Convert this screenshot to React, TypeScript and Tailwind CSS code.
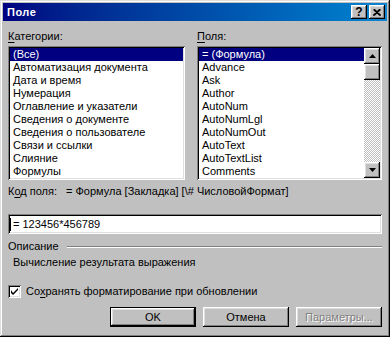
const raised =
  "bg-[#c0c0c0] shadow-[inset_-1px_-1px_#000,inset_1px_1px_#fff,inset_-2px_-2px_#808080,inset_2px_2px_#dfdfdf]";
const sunken =
  "bg-white shadow-[inset_1px_1px_#808080,inset_-1px_-1px_#fff,inset_2px_2px_#000,inset_-2px_-2px_#dfdfdf]";

const categories = [
  "(Все)",
  "Автоматизация документа",
  "Дата и время",
  "Нумерация",
  "Оглавление и указатели",
  "Сведения о документе",
  "Сведения о пользователе",
  "Связи и ссылки",
  "Слияние",
  "Формулы",
];

const fields = [
  "= (Формула)",
  "Advance",
  "Ask",
  "Author",
  "AutoNum",
  "AutoNumLgl",
  "AutoNumOut",
  "AutoText",
  "AutoTextList",
  "Comments",
];

function ListRow({ text, selected }: { text: string; selected?: boolean }) {
  return (
    <div
      className={
        "h-[13px] whitespace-nowrap pl-[3px] leading-[13px] " +
        (selected ? "bg-[#000080] text-white" : "text-black")
      }
    >
      {text}
    </div>
  );
}

function Arrow({ down }: { down?: boolean }) {
  return (
    <div className={"flex h-[16px] items-center justify-center " + raised}>
      <svg width="7" height="4" viewBox="0 0 7 4" className="shrink-0">
        {down ? (
          <polygon points="0,0 7,0 3.5,4" fill="#000" />
        ) : (
          <polygon points="3.5,0 7,4 0,4" fill="#000" />
        )}
      </svg>
    </div>
  );
}

function Button({
  children,
  isDefault,
  disabled,
}: {
  children: React.ReactNode;
  isDefault?: boolean;
  disabled?: boolean;
}) {
  const label = (
    <span
      className={
        disabled ? "text-[#808080] [text-shadow:1px_1px_0_#fff]" : "text-black"
      }
    >
      {children}
    </span>
  );
  if (isDefault) {
    return (
      <div className="h-[20px] w-[86px] border border-black">
        <div className={"flex h-full w-full items-center justify-center " + raised}>
          {label}
        </div>
      </div>
    );
  }
  return (
    <div className={"flex h-[20px] w-[86px] items-center justify-center " + raised}>
      {label}
    </div>
  );
}

export default function App() {
  return (
    <div className="h-[337px] w-[390px] bg-[#c0c0c0] p-[3px] font-['Liberation_Sans',Arial,sans-serif] text-[11px] text-black shadow-[inset_-1px_-1px_#000,inset_1px_1px_#dfdfdf,inset_-2px_-2px_#808080,inset_2px_2px_#fff]">
      {/* title bar */}
      <div className="flex h-[18px] items-center bg-gradient-to-r from-[#000080] to-[#1084d0] pl-[4px] pr-[2px]">
        <span className="flex-1 text-[11px] font-bold tracking-[0.5px] text-white">Поле</span>
        <div className={"flex h-[14px] w-[16px] items-center justify-center text-[12px] font-bold leading-none " + raised}>
          ?
        </div>
        <div className={"ml-[2px] flex h-[14px] w-[16px] items-center justify-center " + raised}>
          <svg width="8" height="7" viewBox="0 0 8 7">
            <path d="M0.5 0.5 L7 6.5 M7.5 0.5 L1 6.5 M1.5 0.5 L8 6.5 M6.5 0.5 L0 6.5" stroke="#000" strokeWidth="1.2" />
          </svg>
        </div>
      </div>

      <div className="px-[5px]">
        {/* lists */}
        <div className="mt-[9px] flex gap-[12px]">
          <div className="w-[177px]">
            <div className="h-[13px] leading-[13px]">
              <span className="underline underline-offset-2">К</span>атегории:
            </div>
            <div className={"mt-[3px] h-[134px] p-[2px] " + sunken}>
              {categories.map((c, i) => (
                <ListRow key={c} text={c} selected={i === 0} />
              ))}
            </div>
          </div>
          <div className="flex-1">
            <div className="h-[13px] leading-[13px]">
              <span className="underline underline-offset-2">П</span>оля:
            </div>
            <div className={"mt-[3px] flex h-[134px] p-[2px] " + sunken}>
              <div className="flex-1 overflow-hidden">
                {fields.map((f, i) => (
                  <ListRow key={f} text={f} selected={i === 0} />
                ))}
              </div>
              <div className="flex w-[16px] flex-col">
                <Arrow />
                <div className={"h-[16px] " + raised} />
                <div className="flex-1 bg-[repeating-conic-gradient(#c0c0c0_0_25%,#fff_0_50%)] bg-[length:2px_2px]" />
                <Arrow down />
              </div>
            </div>
          </div>
        </div>

        {/* field code */}
        <div className="mt-[5px] flex h-[13px] items-center leading-[13px]">
          <span className="w-[58px]">
            К<span className="underline underline-offset-2">о</span>д поля:
          </span>
          <span>= Формула [Закладка] [\# ЧисловойФормат]</span>
        </div>

        <div className={"mt-[16px] flex h-[20px] items-center pl-[2px] " + sunken}>
          <div className="h-[13px] w-px bg-black" />
          <span className="pl-[2px]">= 123456*456789</span>
        </div>

        {/* description */}
        <div className="mt-[6px] flex h-[13px] items-center">
          <span className="leading-[13px]">Описание</span>
          <div className="ml-[8px] h-[2px] flex-1 border-t border-b border-t-[#808080] border-b-white" />
        </div>
        <div className="mt-[3px] h-[13px] pl-[5px] leading-[13px]">
          Вычисление результата выражения
        </div>

        {/* checkbox */}
        <div className="mt-[16px] flex h-[13px] items-center">
          <div className={"flex h-[13px] w-[13px] items-center justify-center " + sunken}>
            <svg width="7" height="7" viewBox="0 0 7 7">
              <path d="M0 2 L0 5 L2 7 L7 2 L7 0 L2 5 Z" fill="#000" />
            </svg>
          </div>
          <span className="ml-[5px] leading-[13px]">
            Со<span className="underline underline-offset-2">х</span>ранять форматирование при обновлении
          </span>
        </div>

        {/* buttons */}
        <div className="mt-[9px] flex justify-end gap-[7px]">
          <Button isDefault>OK</Button>
          <Button>Отмена</Button>
          <Button disabled>Параметры...</Button>
        </div>
      </div>
    </div>
  );
}
